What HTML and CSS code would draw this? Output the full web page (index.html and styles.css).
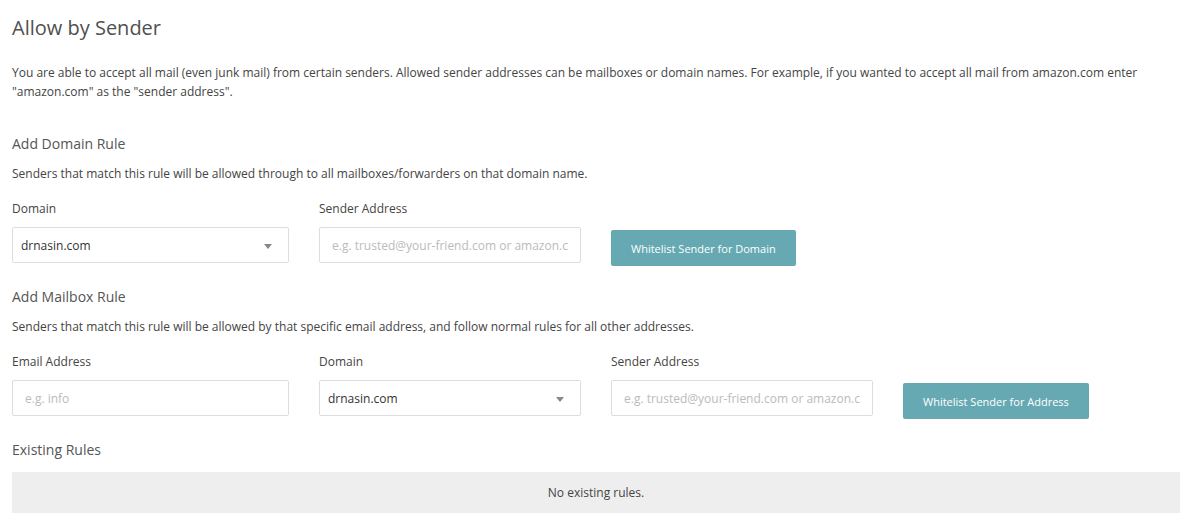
FILE: index.html
```html
<!DOCTYPE html>
<html>
<head>
<meta charset="utf-8">
<link rel="stylesheet" href="styles.css">
</head>
<body>
<div class="page">
  <h1 class="title">Allow by Sender</h1>
  <p class="intro">You are able to accept all mail (even junk mail) from certain senders. Allowed sender addresses can be mailboxes or domain names. For example, if you wanted to accept all mail from amazon.com enter "amazon.com" as the "sender address".</p>

  <h2 class="section">Add Domain Rule</h2>
  <p class="desc">Senders that match this rule will be allowed through to all mailboxes/forwarders on that domain name.</p>
  <div class="row">
    <div class="field wide">
      <label class="label">Domain</label>
      <div class="select"><span>drnasin.com</span><span class="caret"></span></div>
    </div>
    <div class="field">
      <label class="label">Sender Address</label>
      <div class="input placeholder">e.g. trusted@your-friend.com or amazon.c</div>
    </div>
    <div class="btn-wrap"><button class="btn">Whitelist Sender for Domain</button></div>
  </div>

  <h2 class="section mailbox">Add Mailbox Rule</h2>
  <p class="desc">Senders that match this rule will be allowed by that specific email address, and follow normal rules for all other addresses.</p>
  <div class="row">
    <div class="field wide">
      <label class="label">Email Address</label>
      <div class="input placeholder">e.g. info</div>
    </div>
    <div class="field">
      <label class="label">Domain</label>
      <div class="select"><span>drnasin.com</span><span class="caret"></span></div>
    </div>
    <div class="field">
      <label class="label">Sender Address</label>
      <div class="input placeholder">e.g. trusted@your-friend.com or amazon.c</div>
    </div>
    <div class="btn-wrap"><button class="btn">Whitelist Sender for Address</button></div>
  </div>

  <h2 class="section existing">Existing Rules</h2>
  <div class="empty">No existing rules.</div>
</div>
</body>
</html>
```

FILE: styles.css
```css
* { box-sizing: border-box; }
html, body { margin: 0; padding: 0; background: #fff; }
body {
  font-family: "Open Sans", "Liberation Sans", sans-serif;
  color: #444;
}
.page { padding: 14px 8px 0 12px; }
.title {
  margin: 0;
  font-size: 20px;
  font-weight: 400;
  line-height: 28px;
  color: #505050;
}
.intro {
  margin: 21px 0 0;
  font-size: 12px;
  line-height: 19px;
  color: #444;
}
.section {
  margin: 33px 0 0;
  font-size: 14px;
  font-weight: 400;
  line-height: 20px;
  color: #555;
}
.section.mailbox { margin-top: 21px; }
.section.existing { margin-top: 21px; }
.desc {
  margin: 10px 0 0;
  font-size: 12px;
  line-height: 19px;
}
.row {
  display: flex;
  align-items: flex-start;
  gap: 30px;
  margin-top: 16px;
}
.field { width: 262px; }
.field.wide { width: 277px; }
.label {
  display: block;
  font-size: 12px;
  line-height: 19px;
  color: #444;
}
.select, .input {
  margin-top: 9px;
  height: 36px;
  border: 1px solid #ddd;
  border-radius: 2px;
  display: flex;
  align-items: center;
  font-size: 12px;
  padding: 0 8px;
}
.select { justify-content: space-between; color: #333; }
.input { padding-left: 12px; }
.placeholder { color: #bbb; white-space: nowrap; overflow: hidden; }
.caret {
  width: 0; height: 0;
  border-left: 4px solid transparent;
  border-right: 4px solid transparent;
  border-top: 5px solid #888;
  margin-right: 8px;
  margin-top: 2px;
}
.btn-wrap { padding-top: 31px; }
.btn {
  height: 36px;
  padding: 0 20px;
  background: #66a9b2;
  color: #fff;
  border: none;
  border-radius: 2px;
  font-family: inherit;
  font-size: 11px;
}
.empty {
  margin-top: 12px;
  background: #eee;
  height: 41px;
  display: flex;
  align-items: center;
  justify-content: center;
  font-size: 12px;
  color: #444;
}
```
